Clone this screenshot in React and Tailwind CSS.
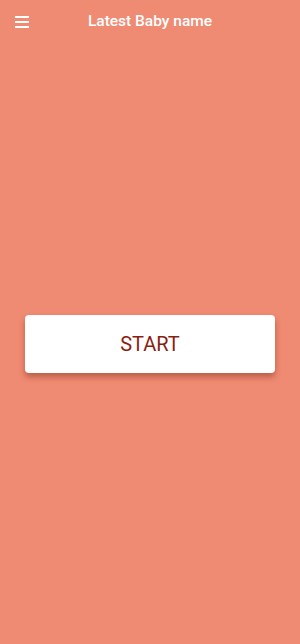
export default function App() {
  return (
    <div className="flex h-[644px] w-[300px] flex-col bg-[#f08b73] font-['Roboto',sans-serif]">
      <header className="relative flex h-[44px] items-center justify-center">
        <button className="absolute left-[15px] top-[15px] flex h-[14px] w-[14px] flex-col justify-between py-[1px]">
          <span className="block h-[2px] w-full bg-white" />
          <span className="block h-[2px] w-full bg-white" />
          <span className="block h-[2px] w-full bg-white" />
        </button>
        <h1 className="text-[15.5px] font-medium text-white">Latest Baby name</h1>
      </header>
      <main className="flex flex-1 items-center justify-center px-[25px]">
        <button className="flex h-[58px] w-full items-center justify-center rounded-[4px] bg-white text-[20px] text-[#8b1e12] shadow-[0_4px_6px_rgba(120,40,20,0.45)]">
          START
        </button>
      </main>
    </div>
  );
}
